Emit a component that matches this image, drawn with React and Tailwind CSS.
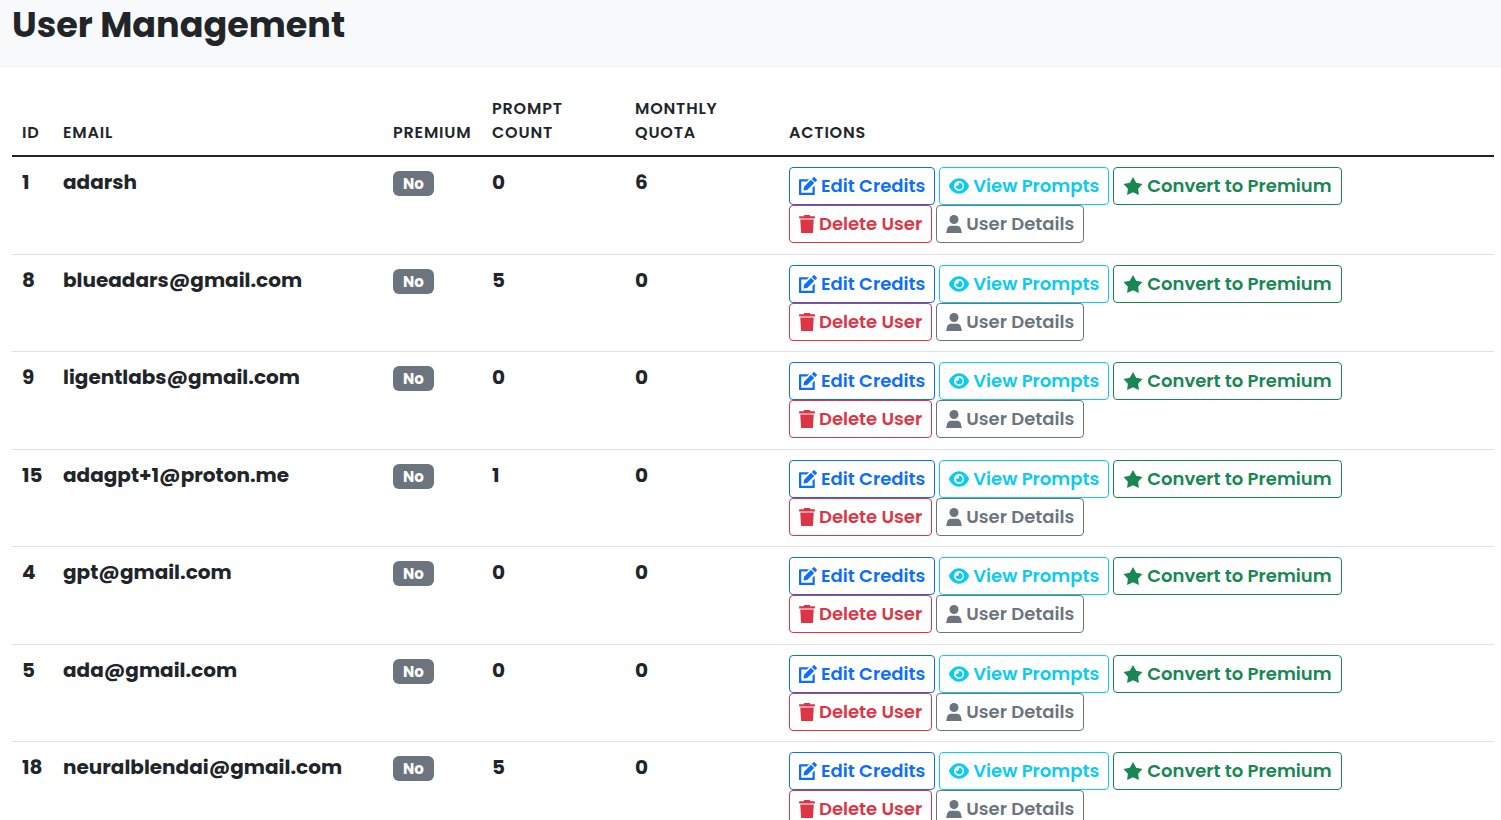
import React from 'react';

const users = [
  { id: 1, email: 'adarsh', premium: false, prompts: 0, quota: 6 },
  { id: 8, email: 'blueadars@gmail.com', premium: false, prompts: 5, quota: 0 },
  { id: 9, email: 'ligentlabs@gmail.com', premium: false, prompts: 0, quota: 0 },
  { id: 15, email: 'adagpt+1@proton.me', premium: false, prompts: 1, quota: 0 },
  { id: 4, email: 'gpt@gmail.com', premium: false, prompts: 0, quota: 0 },
  { id: 5, email: 'ada@gmail.com', premium: false, prompts: 0, quota: 0 },
  { id: 18, email: 'neuralblendai@gmail.com', premium: false, prompts: 5, quota: 0 },
];

const EditIcon = () => (
  <svg viewBox="0 0 512 512" className="h-[18px] w-[18px] shrink-0" fill="currentColor" aria-hidden="true">
    <path d="M24 64H288L224 128H64V448H384V304L448 240V488Q448 512 424 512H24Q0 512 0 488V88Q0 64 24 64Z" />
    <path d="M340 80L432 172L232 368L128 384L144 276ZM364 56L416 6Q428 -4 440 6L506 72Q516 84 506 96L456 148Z" />
  </svg>
);

const EyeIcon = () => (
  <svg viewBox="0 0 576 512" className="h-[18px] w-5 shrink-0" fill="currentColor" aria-hidden="true">
    <path
      fillRule="evenodd"
      d="M288 32C207 32 142 69 95 113C48 156 17 208 2 244Q-2 256 2 268C17 304 48 356 95 399C142 443 207 480 288 480S434 443 481 399C528 356 559 304 574 268Q578 256 574 244C559 208 528 156 481 113C434 69 369 32 288 32ZM144 256A144 144 0 1 1 432 256A144 144 0 1 1 144 256ZM288 192C288 227 259 256 224 256Q208 256 194 249C190 300 230 352 288 352A96 96 0 1 0 281 162Q288 176 288 192Z"
    />
  </svg>
);

const StarIcon = () => (
  <svg viewBox="0 0 576 512" className="h-[18px] w-5 shrink-0" fill="currentColor" aria-hidden="true">
    <path d="M288 0L380 160L562 196L436 332L458 512L288 436L118 512L140 332L14 196L196 160Z" />
  </svg>
);

const TrashIcon = () => (
  <svg viewBox="0 0 448 512" className="h-[18px] w-4 shrink-0" fill="currentColor" aria-hidden="true">
    <path d="M144 0L128 32H0V96H448V32H320L304 0ZM32 128L56 512H392L416 128Z" />
  </svg>
);

const UserIcon = () => (
  <svg viewBox="0 0 448 512" className="h-[18px] w-4 shrink-0" fill="currentColor" aria-hidden="true">
    <circle cx="224" cy="128" r="128" />
    <path d="M144 304H304C382 304 410 346 420 390L448 512H0L28 390C38 346 66 304 144 304Z" />
  </svg>
);

const actions = [
  { label: 'Edit Credits', Icon: EditIcon, color: 'border-[#0d6efd] text-[#0d6efd] hover:bg-[#0d6efd]' },
  { label: 'View Prompts', Icon: EyeIcon, color: 'border-[#0dcaf0] text-[#0dcaf0] hover:bg-[#0dcaf0]' },
  { label: 'Convert to Premium', Icon: StarIcon, color: 'border-[#198754] text-[#198754] hover:bg-[#198754]' },
  { label: 'Delete User', Icon: TrashIcon, color: 'border-[#dc3545] text-[#dc3545] hover:bg-[#dc3545]' },
  { label: 'User Details', Icon: UserIcon, color: 'border-[#6c757d] text-[#6c757d] hover:bg-[#6c757d]' },
];

const ActionButton = ({ label, Icon, color }) => (
  <button
    type="button"
    className={`flex h-[38px] items-center gap-1 whitespace-nowrap rounded border px-[9px] text-[18px] font-semibold hover:text-white ${color}`}
  >
    <Icon />
    {label}
  </button>
);

const UserRow = ({ user }) => (
  <tr className="h-[97px] border-b border-[#dee2e6] align-top odd:h-[98px]">
    <td className="px-[10px] pt-[10px]">{user.id}</td>
    <td className="px-[10px] pt-[10px]">{user.email}</td>
    <td className="px-[10px] pt-[10px]">
      <span className="mt-1 inline-block rounded-md bg-[#6c757d] px-[10px] text-[15px] leading-[25px] font-bold text-white">
        {user.premium ? 'Yes' : 'No'}
      </span>
    </td>
    <td className="px-[10px] pt-[10px]">{user.prompts}</td>
    <td className="px-[10px] pt-[10px]">{user.quota}</td>
    <td className="px-[10px] pt-[10px]">
      <div className="flex max-w-[600px] flex-wrap gap-x-1">
        {actions.map((action) => (
          <ActionButton key={action.label} {...action} />
        ))}
      </div>
    </td>
  </tr>
);

const App = () => {
  return (
    <div className="h-screen overflow-hidden bg-white font-['Poppins','Inter',sans-serif] text-[#212529]">
      <header className="border-b border-[#f1f3f4] bg-[#f8f9fa] px-3 pb-4">
        <h1 className="text-[35px] leading-[50px] font-bold">User Management</h1>
      </header>

      <main className="pt-5 pr-[7px] pl-3">
        <table className="w-full table-fixed border-collapse text-left text-[20px] leading-[30px] font-bold">
          <colgroup>
            <col className="w-[41px]" />
            <col className="w-[330px]" />
            <col className="w-[99px]" />
            <col className="w-[143px]" />
            <col className="w-[154px]" />
            <col />
          </colgroup>
          <thead>
            <tr className="border-b-2 border-[#212529] align-bottom text-[16px] leading-6 tracking-wider uppercase">
              <th scope="col" className="p-[10px] font-semibold">ID</th>
              <th scope="col" className="p-[10px] font-semibold">Email</th>
              <th scope="col" className="p-[10px] font-semibold">Premium</th>
              <th scope="col" className="p-[10px] font-semibold">Prompt<br />Count</th>
              <th scope="col" className="p-[10px] font-semibold">Monthly<br />Quota</th>
              <th scope="col" className="p-[10px] font-semibold">Actions</th>
            </tr>
          </thead>
          <tbody>
            {users.map((user) => (
              <UserRow key={user.id} user={user} />
            ))}
          </tbody>
        </table>
      </main>
    </div>
  );
};

export default App;
